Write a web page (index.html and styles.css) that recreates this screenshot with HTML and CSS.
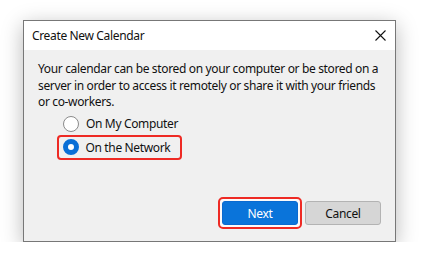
FILE: index.html
```html
<!DOCTYPE html>
<html lang="en">
<head>
  <meta charset="UTF-8">
  <title>Create New Calendar</title>
  <link rel="stylesheet" href="styles.css">
</head>
<body>
  <div class="dialog">
    <div class="titlebar">
      <span class="title">Create New Calendar</span>
      <button class="close" type="button" aria-label="Close">
        <svg width="11" height="11" viewBox="0 0 11 11">
          <path d="M0.5 0.5 L10.5 10.5 M10.5 0.5 L0.5 10.5" stroke="#111" stroke-width="1.1" fill="none"/>
        </svg>
      </button>
    </div>
    <div class="content">
      <p class="intro">Your calendar can be stored on your computer or be stored on a server in order to access it remotely or share it with your friends or co-workers.</p>
      <div class="options">
        <label class="option">
          <span class="radio"></span>
          <span>On My Computer</span>
        </label>
        <label class="option checked highlight">
          <span class="radio"></span>
          <span>On the Network</span>
        </label>
      </div>
      <div class="actions">
        <span class="highlight btn-wrap"><button class="btn primary" type="button">Next</button></span>
        <button class="btn" type="button">Cancel</button>
      </div>
    </div>
  </div>
</body>
</html>
```

FILE: styles.css
```css
* {
  box-sizing: border-box;
}

body {
  margin: 0;
  background: #fff;
  font-family: "Noto Sans", "Open Sans", sans-serif;
  font-size: 12px;
  letter-spacing: -0.35px;
  color: #111;
}

.dialog {
  margin: 20px 0 0 23px;
  width: 373px;
  height: 222px;
  border: 1px solid #777;
  display: flex;
  flex-direction: column;
  box-shadow: 0 5px 20px rgba(0, 0, 0, 0.28);
}

.titlebar {
  height: 29px;
  background: #fff;
  display: flex;
  align-items: center;
  justify-content: space-between;
  padding: 0 9px 0 8px;
}

.close {
  border: none;
  background: none;
  padding: 0;
  width: 12px;
  height: 12px;
  display: flex;
  align-items: center;
  justify-content: center;
}

.content {
  flex: 1;
  background: #f0f0f0;
  padding: 11px 14px 12px 14px;
  display: flex;
  flex-direction: column;
}

.intro {
  margin: 0;
  line-height: 16.5px;
}

.options {
  margin: 5px 0 0 19px;
  display: flex;
  flex-direction: column;
  align-items: flex-start;
  gap: 3px;
}

.option {
  display: flex;
  align-items: center;
  gap: 7px;
  height: 16px;
  padding-left: 6px;
}

.radio {
  width: 16px;
  height: 16px;
  border-radius: 50%;
  border: 1px solid #8a8a8a;
  background: #fff;
}

.checked .radio {
  border: 5px solid #0a6fd6;
  background: #fff;
}

.option.highlight {
  height: 25px;
  padding: 0 10px 0 3.5px;
  border: 2.5px solid #ee2a24;
  border-radius: 4px;
}

.actions {
  margin-top: auto;
  display: flex;
  justify-content: flex-end;
  align-items: center;
  gap: 3px;
}

.btn-wrap {
  padding: 2px;
  border: 2.5px solid #ee2a24;
  border-radius: 5px;
  background: #fafafa;
  display: flex;
}

.btn {
  width: 76px;
  height: 24px;
  font: inherit;
  letter-spacing: inherit;
  color: #111;
  background: #d6d6d6;
  border: 1px solid #b3b3b3;
  border-radius: 3px;
}

.btn.primary {
  background: #0a74da;
  color: #fff;
  border-color: #0a6ad0;
}
```
